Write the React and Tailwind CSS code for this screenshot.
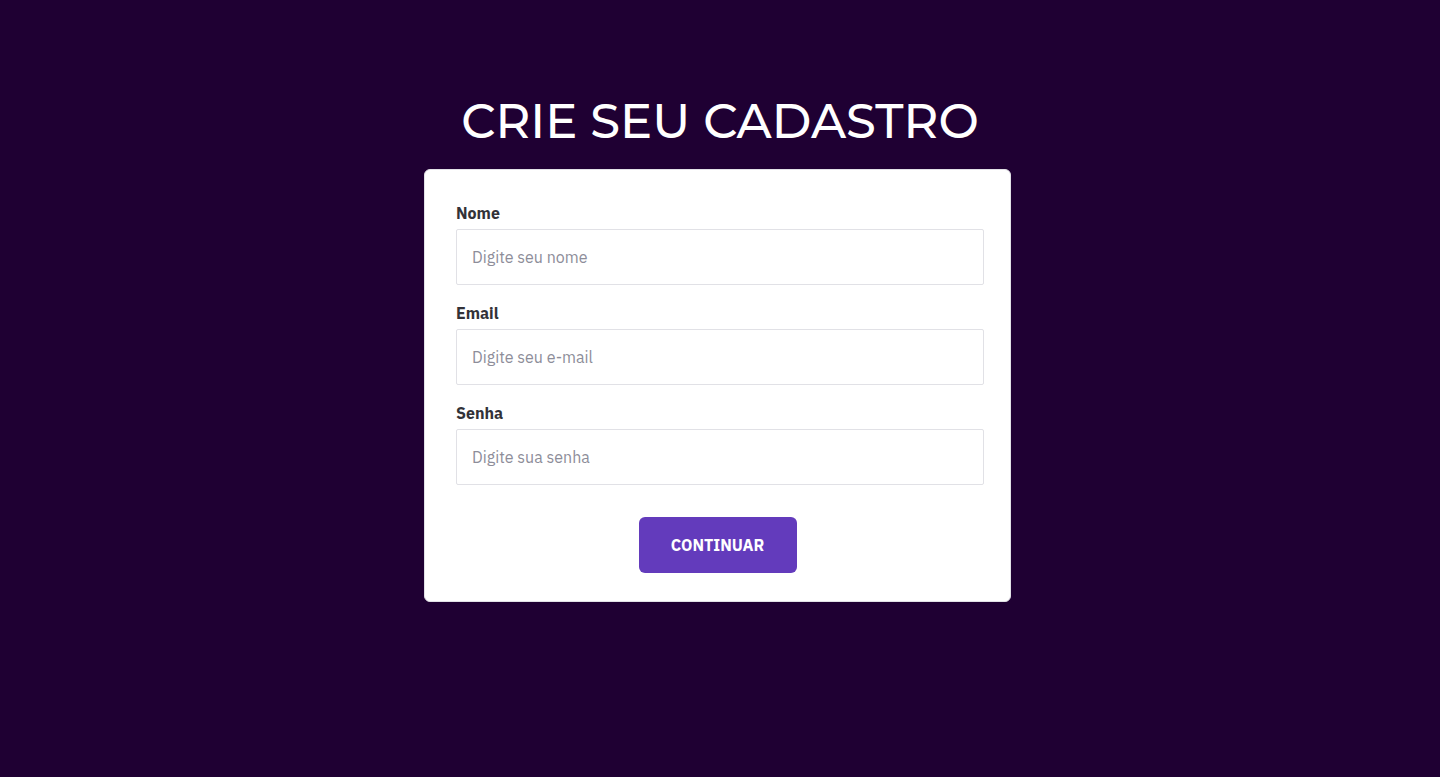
const fields = [
  { id: 'nome', label: 'Nome', type: 'text', placeholder: 'Digite seu nome' },
  { id: 'email', label: 'Email', type: 'email', placeholder: 'Digite seu e-mail' },
  { id: 'senha', label: 'Senha', type: 'password', placeholder: 'Digite sua senha' },
];

function Field({ id, label, type, placeholder }) {
  return (
    <div className="flex flex-col gap-1">
      <label htmlFor={id} className="text-base leading-6 font-bold text-[#323238] antialiased">
        {label}
      </label>
      <input
        id={id}
        name={id}
        type={type}
        placeholder={placeholder}
        className="h-14 w-full rounded-xs border border-[#e1e1e6] bg-white px-[15px] text-base text-[#323238] antialiased placeholder:text-[#8d8d99] focus:outline-2 focus:outline-[#633bbc]"
      />
    </div>
  );
}

export default function App() {
  return (
    <main className="flex min-h-screen flex-col items-center bg-[#1f0033] pt-[91px] font-['IBM_Plex_Sans','Noto_Sans',sans-serif]">
      <h1 className="text-center font-['Montserrat','Inter',sans-serif] text-5xl leading-[60px] font-medium text-white">
        CRIE SEU CADASTRO
      </h1>
      <div className="mt-[18px] w-full max-w-[592px] pr-[5px]">
        <form
          onSubmit={(event) => event.preventDefault()}
          className="flex flex-col items-center gap-8 rounded-md border border-[#e1e1e6] bg-white pt-[31px] pb-7"
        >
          <div className="flex w-full flex-col gap-4 pr-[26px] pl-[31px]">
            {fields.map((field) => (
              <Field key={field.id} {...field} />
            ))}
          </div>
          <button
            type="submit"
            className="h-14 w-[158px] cursor-pointer rounded-md bg-[#633bbc] text-base font-bold text-white"
          >
            CONTINUAR
          </button>
        </form>
      </div>
    </main>
  );
}
